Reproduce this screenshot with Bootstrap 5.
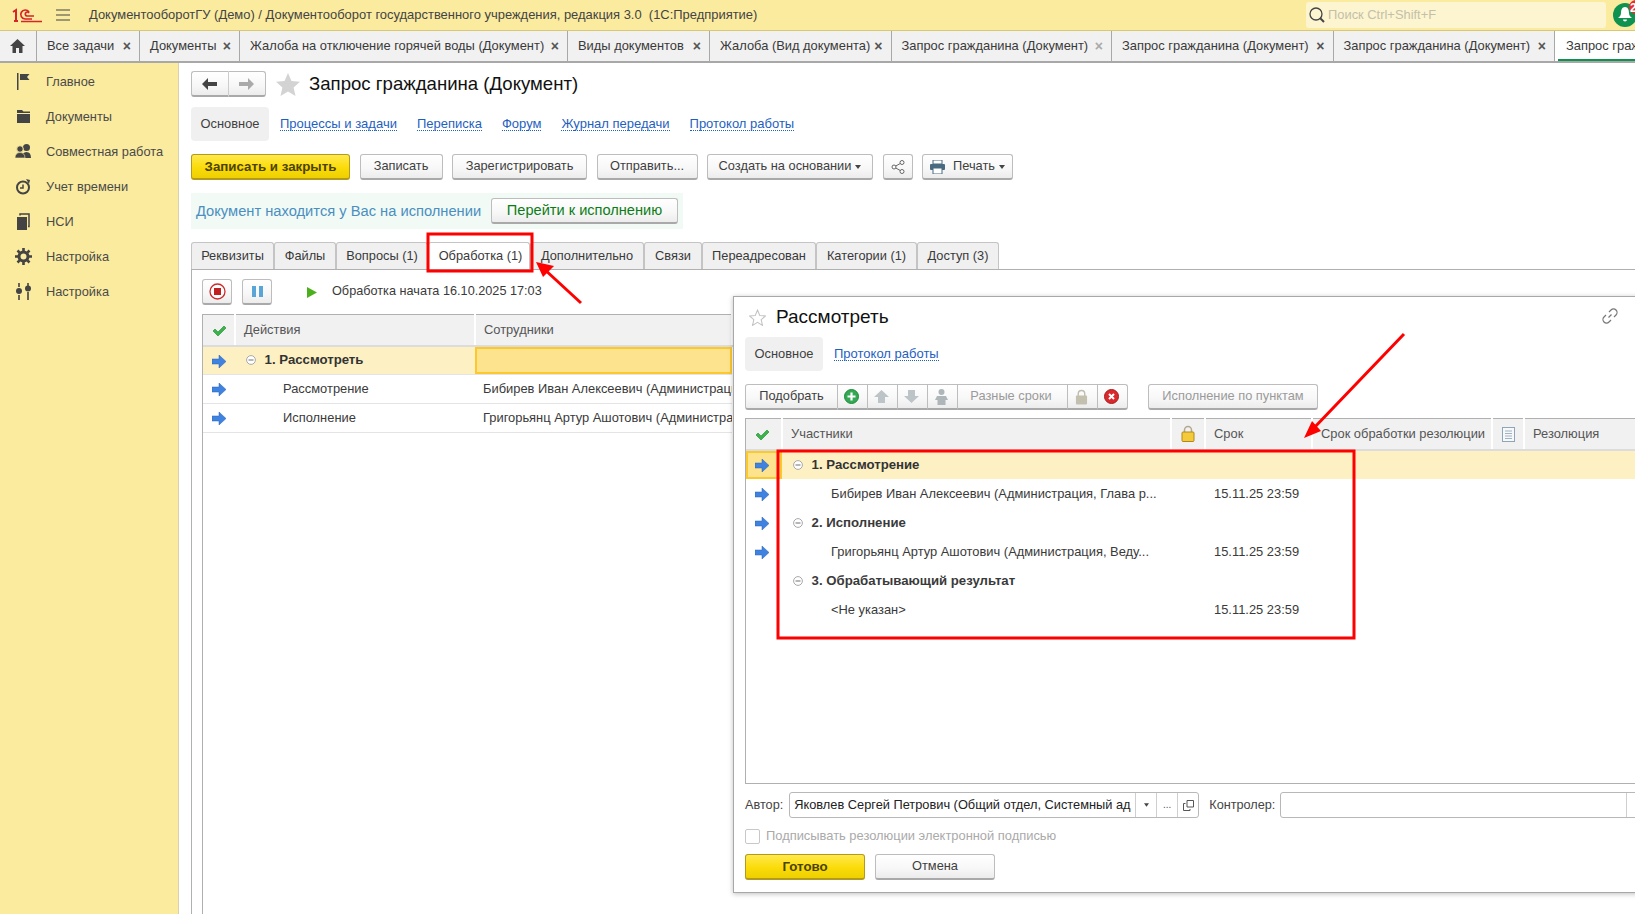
<!DOCTYPE html>
<html lang="ru"><head><meta charset="utf-8"><title>Запрос гражданина</title>
<link rel="stylesheet" href="https://cdn.jsdelivr.net/npm/bootstrap@5.3.0/dist/css/bootstrap.min.css">
<style>
html,body{height:914px;overflow:hidden}
body{font-family:"Liberation Sans",Arial,sans-serif;font-size:12.9px;color:#3a3a3a;background:#fff;line-height:1.2}
.top-bar{height:31px;background:#fbeb9e;border-bottom:1px solid #d8c875}
.logo-box{width:44px;margin-left:12px}
.menu-ic{width:14px;height:12px;margin:0 19px 0 0}
.app-title{font-size:12.95px;color:#444}
.search-box{width:300px;height:26px;background:#fdf5d0;border-radius:3px;color:#c4c0a8;font-size:12.9px;padding-left:2px;margin-right:7px;margin-left:auto}
.search-box svg{margin-right:2px}
.bell-wrap{width:22px;height:30px;overflow:hidden;flex:none}
.tab-bar{height:32px;background:#f1f1f1;border-bottom:2px solid #a8a8a8;white-space:nowrap}
.wtab{height:30px;border-right:1px solid #a8a8a8;padding-left:10px;flex:none}
.wtab .cl{margin-left:auto;margin-right:8px;color:#555;font-size:14px;font-weight:700}
.wtab.dim .cl{color:#aaa}
.wtab.on{background:#fff;border-right:0;position:relative;padding-left:11px;flex:1;overflow:hidden}
.wtab.on::after{content:"";position:absolute;left:3px;right:0;bottom:0;height:2px;background:#0f9150}
.w37{width:37px}.w103{width:103px}.w100{width:100px}.w328{width:328px}.w142{width:142px}.w181{width:181.5px}.w220{width:220.5px}.w221{width:221.5px}
.side-bar{width:179px;flex:none;background:#fbeb9e;border-right:1px solid #d6d2b0;padding-top:1px}
.side-item{height:35px;padding-left:15px;color:#4a4a4a;font-size:12.8px}
.side-item svg{width:17px;height:17px;margin-right:14px;flex:none}
.work-area{position:relative;overflow:hidden;height:852px;padding:0 0 0 12px}
.head-row{height:26px;margin-top:8px}
.btn-1c{--bs-btn-padding-y:0;--bs-btn-padding-x:0;--bs-btn-font-size:12.8px;--bs-btn-color:#3f3f3f;--bs-btn-border-radius:3px;height:26px;background:linear-gradient(#fff,#f7f7f7 60%,#ececec);border:1px solid #bdbdbd;border-bottom:2px solid #a9a9a9;color:#3f3f3f;line-height:1;display:inline-flex;align-items:center;justify-content:center;flex:none;white-space:nowrap}
.btn-1c.gold{background:linear-gradient(#ffe94d,#fbdc0a 55%,#eecf00);border-color:#b29b1c;font-weight:700;color:#4d4300;--bs-btn-font-size:13.3px}
.btn-1c.off{color:#9a9a9a}
.b-pair{width:37.5px;height:26px}
.b-pair:first-child{border-radius:3px 0 0 3px;border-right:1px solid #ccc}
.b-pair:last-child{border-radius:0 3px 3px 0;border-left:0}
.star-big{margin-left:10px}
.doc-title{font-size:18.6px;color:#111;margin-left:9px}
.sub-nav{height:34px;margin-top:10px}
.sub-on{height:34px;width:78px;background:#f0f0f0;border-radius:4px;color:#3f3f3f}
.dot-link{color:#1f5fbf;border-bottom:1px dotted #1f5fbf;line-height:1.05;text-decoration:none;margin-left:11px;margin-right:9px;font-size:13px}
.act-row{margin-top:13px;height:26px}
.w160{width:159px}.w83{width:83px}.w135{width:135px}.w101{width:101px}.w166{width:166px}.w30{width:30px}.w91{width:91px}
.gp9{gap:9.5px}
.info-band{width:492px;height:36px;background:#f2faf6;margin-top:13px}
.info-txt{color:#4a8fc0;font-size:14.7px;margin-left:5px;margin-top:1px;width:287px;flex:none;white-space:nowrap}
.go-btn{width:187px;color:#0b7d16;--bs-btn-font-size:14.6px}
.ftabs{height:28px;margin-top:13px;border-bottom:1px solid #b0b0b0;white-space:nowrap;font-size:12.8px}
.ftab{height:27px;background:#f0f0f0;border:1px solid #c4c4c4;border-bottom:0;border-radius:3px 3px 0 0;flex:none;justify-content:center}
.ftab.on{background:#fff;padding-left:3px}
.w83b{width:83px}.w62{width:62px}.w92{width:92px}.w102{width:102px}.w114{width:114px}.w58{width:58px}.w114b{width:114px}.w101b{width:101px}.w82{width:82px}
.panel{border-left:1px solid #b0b0b0;height:646px;padding:9px 0 0 10px}
.ctl-row{height:26px}
.w30b{width:30px}
.gap10{gap:10px}
.start-txt{margin-left:5px;font-size:12.7px}
.play-ic{margin-left:25px}
.left-grid{border-left:1px solid #b0b0b0;margin-top:9px;height:620px}
.grid-a{table-layout:fixed;--bs-table-bg:transparent;border-top:1px solid #b0b0b0;width:530px;color:#3a3a3a}
.grid-a td,.grid-a th{height:29px;padding:0 8px;border-bottom:1px solid #e4e4e4;font-weight:400;vertical-align:middle;white-space:nowrap;overflow:hidden;box-shadow:none;color:#3a3a3a}
.grid-a th{height:31px;background:#f1f1f1;color:#555;border-right:2px solid #fff;border-bottom:2px solid #dcdcdc}
.grid-a .ic{padding:0;text-align:center}
.grid-a tr.hi td{background:#fdf1c4;color:#333}
.grid-a td.sel{background:#fee38f!important;box-shadow:inset 0 0 0 2px #fbc92e}
.grid-a b{font-weight:700;font-size:13.2px}
.t1{width:32px}.t2{width:240px}
.pad-a{padding-left:48px!important}.pad-b{padding-left:11px!important}
.minus{margin-right:5px;vertical-align:-1px}
.dlg{position:absolute;left:554px;top:233px;width:940px;height:597px;background:#fff;border:1px solid #a8a8a8;box-shadow:0 1px 5px rgba(0,0,0,.25);padding:0 0 0 11px}
.dlg-head{height:40px}
.dlg-title{font-size:19px;color:#111;margin-left:10px}
.link-ic{position:absolute;left:868px;top:11px}
.dlg-nav{height:34px}
.tool-row{margin-top:13px;height:26px}
.seg{border-radius:0;border-left:0}
.seg svg{margin-right:3px}
.seg:first-child{border-radius:3px 0 0 3px;border-left:1px solid #bdbdbd}
.seg.end{border-radius:0 3px 3px 0}
.w93{width:93px}.w30c{width:30px}.w110{width:110px;padding-right:3px}.w170{width:170px}
.ml20{margin-left:20px}
.grid-wrap{height:366px;margin-top:8px;border-bottom:1px solid #b0b0b0;border-left:1px solid #b0b0b0;overflow:hidden}
.grid-b{table-layout:fixed;width:890px}
.grid-b th:nth-child(1){width:36px}.grid-b th:nth-child(2){width:389px}.grid-b th:nth-child(3){width:34px}.grid-b th:nth-child(4){width:107px}.grid-b th:nth-child(5){width:180px}.grid-b th:nth-child(6){width:32px}.grid-b th:nth-child(7){width:112px}
.grid-b td{border-bottom:0;height:29.2px}
.grid-b td:nth-child(4){padding-left:9px}
.grid-b td.sel{background:#fee38f!important}
.grid-b tr>.ic:first-child svg{margin-right:4px}
.pad-c{padding-left:49px!important}
.form-row{height:26px;margin-top:8px;font-size:12.7px;color:#444}
.form-row>span{margin-top:2px}
.fld{height:26px;border:1px solid #b8b8b8;border-radius:3px;background:#fff}
.fld-a{width:410px;margin-left:6px;flex:none}
.fld-txt{flex:1;padding-left:4px;color:#222;white-space:nowrap;overflow:hidden;font-size:12.8px}
.fld-b{width:21px;flex:none;border-left:1px solid #cfcfcf;height:100%;color:#555;font-size:10px}
.ctl-lbl{margin-left:10px;white-space:nowrap}
.fld-c{width:375px;margin-left:5px;flex:none}
.fld-c .fld-b{margin-left:345px}
.chk-row{height:18px;margin-top:9px;color:#aaa;font-size:12.9px}
.chk-box{width:15px;height:15px;border:1px solid #c8c8c8;border-radius:2px;margin-right:6px}
.foot-row{margin-top:9px;height:26px}
.w120{width:120px}
.marks{position:absolute;left:0;top:0;pointer-events:none;z-index:9}
</style></head><body>
<svg width="0" height="0" class="position-absolute">
<symbol id="b-arrow" viewBox="0 0 14 13"><path d="M0 4h7V0l7 6.500-7 6.500V9H0z" fill="#3f82e0" stroke="#2a62b4" stroke-width=".5"/></symbol>
<symbol id="chk" viewBox="0 0 14 12"><path d="M1 6l2-2 3 3 6-6 2 2-8 8z" fill="#3bb34a" stroke="#1f8a32" stroke-width=".6"/></symbol>
<symbol id="mns" viewBox="0 0 10 10"><circle cx="5" cy="5" r="4.400" fill="#fff" stroke="#a8a8a8"/><path d="M2.500 5h5" stroke="#888" stroke-width="1.200"/></symbol>
<symbol id="lck" viewBox="0 0 14 17"><path d="M3.500 8V5a3.500 3.500 0 0 1 7 0v3" fill="none" stroke="#b0a890" stroke-width="1.500"/><rect x="1" y="7" width="12" height="9.500" rx="1" fill="#f4c93c" stroke="#b08a18"/></symbol>
</svg>
<div class="top-bar d-flex align-items-center">
 <div class="logo-box"><svg width="31" height="17" viewBox="0 0 31 17"><path d="M1 5l3-2v11M2 14h4" fill="none" stroke="#d8232a" stroke-width="2"/><path d="M20 12h-7a4.500 4.500 0 1 1 4-7M22 9h-7a2 2 0 1 1 2-3M9 14.500h21" fill="none" stroke="#d8232a" stroke-width="1.700"/></svg></div>
 <svg class="menu-ic" viewBox="0 0 14 12"><path d="M0 1h14M0 6h14M0 11h14" stroke="#444" stroke-width="1.200"/></svg>
 <span class="app-title">ДокументооборотГУ (Демо) / Документооборот государственного учреждения, редакция 3.0&nbsp; (1С:Предприятие)</span>
 <div class="search-box d-flex align-items-center"><svg width="18" height="18" viewBox="0 0 18 18"><circle cx="8" cy="8" r="6" fill="none" stroke="#444" stroke-width="1.300"/><path d="M12 12l4 4" stroke="#444" stroke-width="2"/></svg>Поиск Ctrl+Shift+F</div>
 <div class="bell-wrap"><svg width="30" height="30" viewBox="0 0 30 30"><circle cx="12" cy="15" r="12" fill="#0f9150"/><path d="M12 7c-3 0-4 3-4 6 0 3-2 4-3 5h14c-1-1-3-2-3-5 0-3-1-6-4-6zM10 19.500h4a2 2 0 0 1-4 0z" fill="#fff"/><circle cx="23" cy="7" r="7" fill="#ee2b2b"/><text x="17" y="11.500" font-size="12" font-weight="700" fill="#fff" font-family="Liberation Sans">2</text></svg></div>
</div>
<div class="tab-bar d-flex">
 <div class="wtab w37 d-flex align-items-center"><svg width="15" height="14" viewBox="0 0 15 14"><path d="M7.500 0L0 7h2.500v7h3.500V9h3v5h3.500V7H15z" fill="#444"/></svg></div>
 <div class="wtab w103 d-flex align-items-center">Все задачи<span class="cl">×</span></div>
 <div class="wtab w100 d-flex align-items-center">Документы<span class="cl">×</span></div>
 <div class="wtab w328 d-flex align-items-center">Жалоба на отключение горячей воды (Документ)<span class="cl">×</span></div>
 <div class="wtab w142 d-flex align-items-center">Виды документов<span class="cl">×</span></div>
 <div class="wtab w181 d-flex align-items-center">Жалоба (Вид документа)<span class="cl">×</span></div>
 <div class="wtab w220 dim d-flex align-items-center">Запрос гражданина (Документ)<span class="cl">×</span></div>
 <div class="wtab w221 d-flex align-items-center">Запрос гражданина (Документ)<span class="cl">×</span></div>
 <div class="wtab w221 d-flex align-items-center">Запрос гражданина (Документ)<span class="cl">×</span></div>
 <div class="wtab on d-flex align-items-center">Запрос гражданина (Документ)</div>
</div>
<div class="d-flex">
 <nav class="side-bar">
  <div class="side-item d-flex align-items-center"><svg viewBox="0 0 17 17"><path d="M2 0h1.500v17H2z" fill="#444"/><path d="M5 1h9.500l-2.500 3 2.500 3H5z" fill="#444"/></svg>Главное</div>
  <div class="side-item d-flex align-items-center"><svg viewBox="0 0 17 17"><path d="M2 2h5l1.500 1.500H15V5H2z" fill="#444"/><rect x="2" y="6" width="13" height="9" fill="#444"/></svg>Документы</div>
  <div class="side-item d-flex align-items-center"><svg viewBox="0 0 17 17"><circle cx="11.500" cy="4.500" r="3.500" fill="#444"/><path d="M7 15c0-4 1.500-6 4.500-6s4.500 2 4.500 6z" fill="#444"/><circle cx="5" cy="6" r="3.300" fill="#444" stroke="#fbeb9e"/><path d="M0 15c0-3.500 2-5.500 5-5.500s5 2 5 5.500z" fill="#444" stroke="#fbeb9e" stroke-width=".6"/></svg>Совместная работа</div>
  <div class="side-item d-flex align-items-center"><svg viewBox="0 0 17 17"><circle cx="8" cy="9.500" r="6" fill="none" stroke="#444" stroke-width="2"/><path d="M8 6.500v3.500H5" fill="none" stroke="#444" stroke-width="1.500"/><path d="M11 1l4 1-1 4z" fill="#444"/></svg>Учет времени</div>
  <div class="side-item d-flex align-items-center"><svg viewBox="0 0 17 17"><rect x="2" y="4" width="10" height="13" fill="#444"/><path d="M5 2.500V1h9v12.500h-1" fill="none" stroke="#444" stroke-width="1.500"/></svg>НСИ</div>
  <div class="side-item d-flex align-items-center"><svg viewBox="0 0 17 17"><circle cx="8.500" cy="8.500" r="4.500" fill="none" stroke="#444" stroke-width="3"/><path d="M8.500 0v17M0 8.500h17M2.500 2.500l12 12M14.500 2.500l-12 12" stroke="#444" stroke-width="2.600" stroke-dasharray="3 11"/></svg>Настройка</div>
  <div class="side-item d-flex align-items-center"><svg viewBox="0 0 17 17"><path d="M4 0v4M13 0v3M4 12v5M13 9v8" stroke="#444" stroke-width="1.600"/><circle cx="4" cy="8" r="3" fill="#444"/><circle cx="13" cy="5.500" r="3" fill="#444"/></svg>Настройка</div>
 </nav>
 <main class="work-area flex-grow-1">
  <div class="head-row d-flex align-items-center">
   <div class="d-flex"><button class="btn btn-1c b-pair"><svg width="15" height="12" viewBox="0 0 15 12"><path d="M6 0v4h9v4H6v4L0 6z" fill="#444"/></svg></button><button class="btn btn-1c b-pair"><svg width="15" height="12" viewBox="0 0 15 12"><path d="M9 0v4H0v4h9v4l6-6z" fill="#aaa"/></svg></button></div>
   <svg width="24" height="23" viewBox="0 0 24 23" class="star-big"><path d="M12 0l3.500 8 8.500.8-6.400 5.700 1.900 8.500-7.500-4.400L4.500 23l1.900-8.500L0 8.800 8.500 8z" fill="#d3d3d3"/></svg>
   <span class="doc-title">Запрос гражданина (Документ)</span>
  </div>
  <div class="sub-nav d-flex align-items-center">
   <div class="sub-on d-flex align-items-center justify-content-center">Основное</div>
   <a class="dot-link" href="#">Процессы и задачи</a><a class="dot-link" href="#">Переписка</a><a class="dot-link" href="#">Форум</a><a class="dot-link" href="#">Журнал передачи</a><a class="dot-link" href="#">Протокол работы</a>
  </div>
  <div class="act-row d-flex gp9">
   <button class="btn btn-1c gold w160">Записать и закрыть</button>
   <button class="btn btn-1c w83">Записать</button>
   <button class="btn btn-1c w135">Зарегистрировать</button>
   <button class="btn btn-1c w101">Отправить...</button>
   <button class="btn btn-1c w166">Создать на основании <svg width="6" height="4" viewBox="0 0 6 4" class="ms-1"><path d="M0 0h6L3 4z" fill="#444"/></svg></button>
   <button class="btn btn-1c w30"><svg width="14" height="14" viewBox="0 0 14 14"><path d="M3 7l8-4.500M3 7l8 4.500" stroke="#666"/><circle cx="3" cy="7" r="2" fill="#fff" stroke="#666"/><circle cx="11" cy="2.500" r="2" fill="#fff" stroke="#666"/><circle cx="11" cy="11.500" r="2" fill="#fff" stroke="#666"/></svg></button>
   <button class="btn btn-1c w91"><svg width="15" height="14" viewBox="0 0 15 14" class="me-2"><path d="M3 0h9v4H3z" fill="#fff" stroke="#4a6a80"/><rect y="4" width="15" height="6" rx="1" fill="#4a6a80"/><path d="M3 8h9v6H3z" fill="#fff" stroke="#4a6a80"/></svg>Печать <svg width="6" height="4" viewBox="0 0 6 4" class="ms-1"><path d="M0 0h6L3 4z" fill="#444"/></svg></button>
  </div>
  <div class="info-band d-flex align-items-center"><span class="info-txt">Документ находится у Вас на исполнении</span><button class="btn btn-1c go-btn ms-2">Перейти к исполнению</button></div>
  <div class="ftabs d-flex">
   <div class="ftab w83b d-flex align-items-center">Реквизиты</div><div class="ftab w62 d-flex align-items-center">Файлы</div><div class="ftab w92 d-flex align-items-center">Вопросы (1)</div><div class="ftab on w102 d-flex align-items-center">Обработка (1)</div><div class="ftab w114 d-flex align-items-center">Дополнительно</div><div class="ftab w58 d-flex align-items-center">Связи</div><div class="ftab w114b d-flex align-items-center">Переадресован</div><div class="ftab w101b d-flex align-items-center">Категории (1)</div><div class="ftab w82 d-flex align-items-center">Доступ (3)</div>
  </div>
  <div class="panel">
   <div class="ctl-row d-flex align-items-center gap10">
    <button class="btn btn-1c w30b"><svg width="17" height="17" viewBox="0 0 17 17"><circle cx="8.500" cy="8.500" r="7.500" fill="#fff" stroke="#cc2b2b" stroke-width="1.300"/><rect x="5" y="5" width="7" height="7" fill="#c02020"/></svg></button>
    <button class="btn btn-1c w30b"><svg width="11" height="11" viewBox="0 0 11 11"><path d="M0 0h4v11H0zM7 0h4v11H7z" fill="#5aa5d8"/></svg></button>
    <svg class="play-ic" width="10" height="11" viewBox="0 0 10 11"><path d="M0 0l10 5.500L0 11z" fill="#4cb01c"/></svg>
    <span class="start-txt">Обработка начата 16.10.2025 17:03</span>
   </div>
   <div class="left-grid">
   <table class="table grid-a mb-0"><colgroup><col class="t1"><col class="t2"><col></colgroup>
    <thead><tr><th class="ic"><svg width="14" height="12"><use href="#chk"/></svg></th><th>Действия</th><th>Сотрудники</th></tr></thead>
    <tbody>
     <tr class="hi"><td class="ic"><svg width="14" height="13"><use href="#b-arrow"/></svg></td><td class="pad-b"><svg class="minus" width="10" height="10"><use href="#mns"/></svg> <b>1. Рассмотреть</b></td><td class="sel"></td></tr>
     <tr><td class="ic"><svg width="14" height="13"><use href="#b-arrow"/></svg></td><td class="pad-a">Рассмотрение</td><td>Бибирев Иван Алексеевич (Администрация, Глава района)</td></tr>
     <tr><td class="ic"><svg width="14" height="13"><use href="#b-arrow"/></svg></td><td class="pad-a">Исполнение</td><td>Григорьянц Артур Ашотович (Администрация, Ведущий)</td></tr>
    </tbody>
   </table>
   </div>
  </div>
  <section class="dlg">
   <div class="dlg-head d-flex align-items-center"><svg width="17" height="17" viewBox="0 0 24 23" class="ms-1"><path d="M12 1l3.200 7.600 8 .7-6 5.300 1.800 8L12 18.400 5 22.600l1.800-8-6-5.300 8-.7z" fill="#fff" stroke="#c4c4c4" stroke-width="1.500"/></svg><span class="dlg-title">Рассмотреть</span></div>
   <svg class="link-ic" width="16" height="16" viewBox="0 0 16 16"><path d="M6.500 9.500l3-3M7 4l2-2a3 3 0 0 1 5 5l-2 2M9 12l-2 2a3 3 0 0 1-5-5l2-2" fill="none" stroke="#777" stroke-width="1.200"/></svg>
   <div class="dlg-nav d-flex align-items-center"><div class="sub-on d-flex align-items-center justify-content-center">Основное</div><a class="dot-link" href="#">Протокол работы</a></div>
   <div class="tool-row d-flex">
    <div class="d-flex">
     <button class="btn btn-1c seg w93">Подобрать</button>
     <button class="btn btn-1c seg w30c"><svg width="15" height="15" viewBox="0 0 15 15"><circle cx="7.500" cy="7.500" r="7" fill="#34a853" stroke="#1d8a3a"/><path d="M7.500 3.500v8M3.500 7.500h8" stroke="#fff" stroke-width="2.200"/></svg></button>
     <button class="btn btn-1c off seg w30c"><svg width="15" height="13" viewBox="0 0 15 13"><path d="M7.500 0L15 7h-4v6H4V7H0z" fill="#bcc4c8"/></svg></button>
     <button class="btn btn-1c off seg w30c"><svg width="15" height="13" viewBox="0 0 15 13"><path d="M7.500 13L15 6h-4V0H4v6H0z" fill="#bcc4c8"/></svg></button>
     <button class="btn btn-1c off seg w30c"><svg width="15" height="16" viewBox="0 0 15 16"><circle cx="7.500" cy="3" r="3" fill="#aeb6ba"/><path d="M3 7h9l2 4h-2.500v5h-8v-5H1z" fill="#aeb6ba"/></svg></button>
     <button class="btn btn-1c off seg w110">Разные сроки</button>
     <button class="btn btn-1c off seg w30c"><svg width="13" height="16" viewBox="0 0 14 17"><path d="M3.500 8V5a3.500 3.500 0 0 1 7 0v3" fill="none" stroke="#c0bcae" stroke-width="1.500"/><rect x="1" y="7" width="12" height="9.500" rx="1" fill="#c4c0b0"/></svg></button>
     <button class="btn btn-1c seg end w30c"><svg width="15" height="15" viewBox="0 0 15 15"><circle cx="7.500" cy="7.500" r="7" fill="#d9292c" stroke="#a81c1f"/><path d="M5 5l5 5M10 5l-5 5" stroke="#fff" stroke-width="2"/></svg></button>
    </div>
    <button class="btn btn-1c off w170 ml20">Исполнение по пунктам</button>
   </div>
   <div class="grid-wrap">
   <table class="table grid-a grid-b mb-0">
    <thead><tr><th class="ic"><svg width="14" height="12"><use href="#chk"/></svg></th><th>Участники</th><th class="ic"><svg width="14" height="17"><use href="#lck"/></svg></th><th>Срок</th><th>Срок обработки резолюции</th><th class="ic"><svg width="13" height="15" viewBox="0 0 13 15"><rect x=".5" y=".5" width="12" height="14" fill="#f6f8fa" stroke="#8fa6b8"/><path d="M3 4h7M3 6.500h7M3 9h7M3 11.500h7" stroke="#9fb2c2"/></svg></th><th>Резолюция</th></tr></thead>
    <tbody>
     <tr class="hi"><td class="ic sel"><svg width="14" height="13"><use href="#b-arrow"/></svg></td><td class="pad-b"><svg class="minus" width="10" height="10"><use href="#mns"/></svg> <b>1. Рассмотрение</b></td><td></td><td></td><td></td><td></td><td></td></tr>
     <tr><td class="ic"><svg width="14" height="13"><use href="#b-arrow"/></svg></td><td class="pad-c">Бибирев Иван Алексеевич (Администрация, Глава р...</td><td></td><td>15.11.25 23:59</td><td></td><td></td><td></td></tr>
     <tr><td class="ic"><svg width="14" height="13"><use href="#b-arrow"/></svg></td><td class="pad-b"><svg class="minus" width="10" height="10"><use href="#mns"/></svg> <b>2. Исполнение</b></td><td></td><td></td><td></td><td></td><td></td></tr>
     <tr><td class="ic"><svg width="14" height="13"><use href="#b-arrow"/></svg></td><td class="pad-c">Григорьянц Артур Ашотович (Администрация, Веду...</td><td></td><td>15.11.25 23:59</td><td></td><td></td><td></td></tr>
     <tr><td></td><td class="pad-b"><svg class="minus" width="10" height="10"><use href="#mns"/></svg> <b>3. Обрабатывающий результат</b></td><td></td><td></td><td></td><td></td><td></td></tr>
     <tr><td></td><td class="pad-c">&lt;Не указан&gt;</td><td></td><td>15.11.25 23:59</td><td></td><td></td><td></td></tr>
    </tbody>
   </table>
   </div>
   <div class="form-row d-flex align-items-center">
    <span>Автор:</span>
    <div class="fld fld-a d-flex align-items-center"><span class="fld-txt">Яковлев Сергей Петрович (Общий отдел, Системный ад</span><span class="fld-b d-flex align-items-center justify-content-center"><svg width="5" height="4" viewBox="0 0 6 4"><path d="M0 0h6L3 4z" fill="#444"/></svg></span><span class="fld-b d-flex align-items-center justify-content-center">...</span><span class="fld-b d-flex align-items-center justify-content-center"><svg width="11" height="11" viewBox="0 0 11 11"><path d="M4 .5h6.500V7H4zM2.500 3.500H.5V10.500H7V9" fill="none" stroke="#555"/></svg></span></div>
    <span class="ctl-lbl">Контролер:</span>
    <div class="fld fld-c d-flex"><span class="fld-b d-flex align-items-center justify-content-center"><svg width="5" height="4" viewBox="0 0 6 4"><path d="M0 0h6L3 4z" fill="#444"/></svg></span></div>
   </div>
   <div class="chk-row d-flex align-items-center"><span class="chk-box"></span>Подписывать резолюции электронной подписью</div>
   <div class="foot-row d-flex gap10"><button class="btn btn-1c gold w120">Готово</button><button class="btn btn-1c w120">Отмена</button></div>
  </section>
 </main>
</div>
<svg class="marks" width="1635" height="914" viewBox="0 0 1635 914">
 <g fill="none" stroke="#f00" stroke-width="3"><rect x="428" y="234" width="104" height="37"/><rect x="778" y="451" width="576" height="187"/><path d="M581 303l-38-35M1404 334l-92 96"/></g>
 <path d="M536 262l18 4-11 11zM1304 438l17-7-9-10z" fill="#f00"/>
</svg>
</body></html>
